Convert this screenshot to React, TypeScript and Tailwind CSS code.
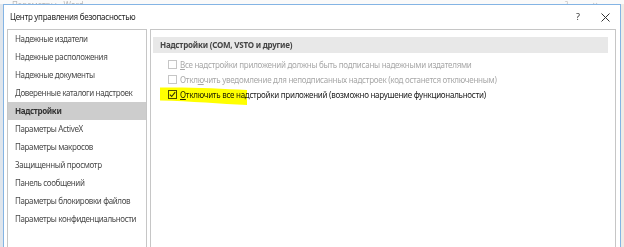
import React from "react";

const items = [
  "Надежные издатели",
  "Надежные расположения",
  "Надежные документы",
  "Доверенные каталоги надстроек",
  "Надстройки",
  "Параметры ActiveX",
  "Параметры макросов",
  "Защищенный просмотр",
  "Панель сообщений",
  "Параметры блокировки файлов",
  "Параметры конфиденциальности",
];

function Box({ checked, disabled }: { checked?: boolean; disabled?: boolean }) {
  return (
    <span
      className={
        "w-[9px] h-[9px] shrink-0 border bg-white flex items-center justify-center " +
        (disabled ? "border-[#c6c6c6]" : "border-[#4a4a4a]")
      }
    >
      {checked && (
        <svg width="7" height="7" viewBox="0 0 7 7">
          <path d="M0.8 3.6 L2.7 5.5 L6.2 1.2" fill="none" stroke="#333" strokeWidth="1.1" />
        </svg>
      )}
    </span>
  );
}

export default function App() {
  return (
    <div className="w-[624px] h-[247px] overflow-hidden bg-[#e6ecf3] flex flex-col font-['Noto_Sans',sans-serif]">
      <div className="h-[4px] shrink-0 overflow-hidden bg-[#fafafa] flex items-end">
        <span className="ml-[12px] -mb-[6px] text-[8px] leading-[10px] text-[#b9b9b9] whitespace-nowrap">
          Параметры - Word
        </span>
        <span className="ml-auto -mb-[6px] text-[8px] leading-[10px] text-[#c4c4c4]">?</span>
        <span className="ml-[24px] mr-[26px] -mb-[6px] text-[10px] leading-[10px] text-[#c4c4c4]">×</span>
      </div>
      <div className="flex flex-1 min-h-0">
        <div className="w-[3px] shrink-0 bg-[#dfe5ec]" />
        <div className="flex-1 border border-b-0 border-[#84b4e4] bg-white flex flex-col min-w-0">
          <div className="h-[24px] shrink-0 flex items-center pl-[6px] pr-[10px]">
            <span className="text-[8px] tracking-[-0.27px] text-[#1e1e1e] whitespace-nowrap">Центр управления безопасностью</span>
            <span className="ml-auto text-[9px] text-[#333]">?</span>
            <svg className="ml-[21px]" width="9" height="9" viewBox="0 0 9 9">
              <path d="M0.5 0.5 L8.5 8.5 M8.5 0.5 L0.5 8.5" stroke="#333" strokeWidth="1" />
            </svg>
          </div>
          <div className="flex flex-1 min-h-0 pl-[3px] pr-[4px] gap-[3px]">
            <div className="w-[140px] shrink-0 border border-b-0 border-[#c6c6c6] flex flex-col">
              {items.map((t) => {
                const sel = t === "Надстройки";
                return (
                  <div
                    key={t}
                    className={
                      "h-[18px] shrink-0 flex items-center pl-[7px] text-[8px] tracking-[-0.36px] whitespace-nowrap " +
                      (sel ? "bg-[#cdcdcd] font-bold text-[#333]" : "text-[#4a4a4a]")
                    }
                  >
                    {t}
                  </div>
                );
              })}
            </div>
            <div className="flex-1 min-w-0 border border-b-0 border-[#c6c6c6] relative flex flex-col">
              <div className="mt-[7px] ml-[2px] mr-[7px] h-[16px] bg-[#e8e8e8] pl-[7px] flex items-center text-[8px] tracking-[-0.22px] font-bold text-[#444] whitespace-nowrap">
                Надстройки (COM, VSTO и другие)
              </div>
              <div className="mt-[4px] flex flex-col tracking-[-0.27px]">
                <div className="h-[15px] flex items-center pl-[17px] gap-[3px] text-[8px] text-[#a8a8a8] whitespace-nowrap">
                  <Box disabled />
                  <span>
                    <span className="underline">В</span>се надстройки приложений должны быть подписаны надежными издателями
                  </span>
                </div>
                <div className="h-[15px] flex items-center pl-[17px] gap-[3px] text-[8px] text-[#a8a8a8] whitespace-nowrap">
                  <Box disabled />
                  <span>
                    Откл<span className="underline">ю</span>чить уведомление для неподписанных надстроек (код останется отключенным)
                  </span>
                </div>
                <div className="h-[15px] flex items-center pl-[17px] gap-[3px] text-[8px] text-[#222] whitespace-nowrap">
                  <Box checked />
                  <span>
                    <span className="underline">О</span>тключить все надстройки приложений (возможно нарушение функциональности)
                  </span>
                </div>
              </div>
              <svg
                className="absolute left-0 top-0 pointer-events-none mix-blend-multiply"
                width="110"
                height="80"
                viewBox="0 0 110 80"
              >
                <path d="M9 57.5 C40 57 70 58.5 96 60 L96 75 C70 74 40 71 9 70.5 Z" fill="#ffff00" />
              </svg>
            </div>
          </div>
        </div>
        <div className="w-[3px] shrink-0 bg-[#efebe5]" />
      </div>
    </div>
  );
}
